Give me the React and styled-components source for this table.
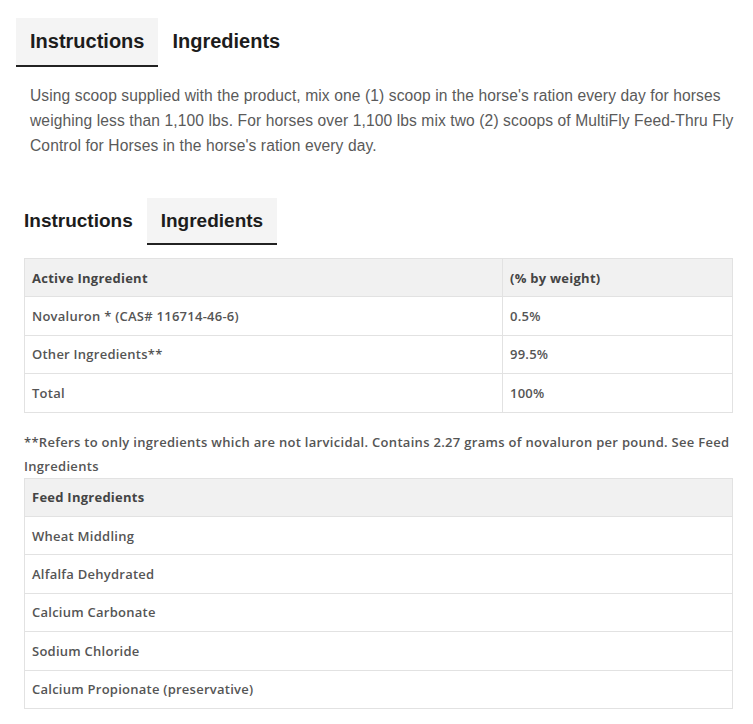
import React from "react";
import styled, { createGlobalStyle } from "styled-components";

const Global = createGlobalStyle`
  html, body { margin: 0; padding: 0; background: #fff; }
  body { font-family: "Liberation Sans", Arial, sans-serif; }
`;

const Page = styled.div`
  width: 753px;
  display: flex;
  flex-direction: column;
`;

const TabBar = styled.div`
  display: flex;
  margin: ${(p) => p.$margin};
`;

const Tab = styled.div`
  height: ${(p) => p.$h}px;
  box-sizing: border-box;
  padding: 0 14px;
  display: flex;
  align-items: center;
  font-family: "Liberation Sans", Arial, sans-serif;
  font-weight: 700;
  font-size: ${(p) => p.$size}px;
  color: #1c1c1c;
  background: ${(p) => (p.$active ? "#f4f4f4" : "transparent")};
  border-bottom: 2px solid ${(p) => (p.$active ? "#222" : "transparent")};
`;

const Paragraph = styled.p`
  margin: 16px 0 0 30px;
  width: 712px;
  font-family: "Liberation Sans", Arial, sans-serif;
  font-size: 15.6px;
  line-height: 25px;
  letter-spacing: 0.1px;
  color: #5a5a5a;
`;

const Table = styled.table`
  margin: 0 0 0 24px;
  width: 709px;
  border-collapse: collapse;
  font-family: "Open Sans", sans-serif;
  font-size: 13px;
  color: #555;
`;

const Cell = styled.td`
  height: 38.4px;
  box-sizing: border-box;
  padding: 0 7px;
  border: 1px solid #e2e2e2;
  font-weight: 600;
  letter-spacing: 0.25px;
  width: ${(p) => p.$w || "auto"};
`;

const HeadCell = styled(Cell).attrs({ as: "th" })`
  text-align: left;
  background: #f1f1f1;
  font-weight: 700;
  color: #444;
`;

const Footnote = styled.p`
  margin: 17px 0 0 24px;
  width: 715px;
  font-family: "Open Sans", sans-serif;
  font-size: 13px;
  font-weight: 600;
  line-height: 24px;
  letter-spacing: 0.3px;
  color: #555;
`;

const active = [
  ["Novaluron * (CAS# 116714-46-6)", "0.5%"],
  ["Other Ingredients**", "99.5%"],
  ["Total", "100%"],
];

const feed = [
  "Wheat Middling",
  "Alfalfa Dehydrated",
  "Calcium Carbonate",
  "Sodium Chloride",
  "Calcium Propionate (preservative)",
];

export default function App() {
  return (
    <Page>
      <Global />
      <TabBar $margin="18px 0 0 16px">
        <Tab $active $h={49} $size={20}>Instructions</Tab>
        <Tab $h={49} $size={20}>Ingredients</Tab>
      </TabBar>
      <Paragraph>
        Using scoop supplied with the product, mix one (1) scoop in the horse's ration every day for horses
        weighing less than 1,100 lbs. For horses over 1,100 lbs mix two (2) scoops of MultiFly Feed-Thru Fly
        Control for Horses in the horse's ration every day.
      </Paragraph>
      <TabBar $margin="40px 0 13px 10px">
        <Tab $h={47} $size={19}>Instructions</Tab>
        <Tab $active $h={47} $size={19}>Ingredients</Tab>
      </TabBar>
      <Table>
        <thead>
          <tr>
            <HeadCell $w="478px">Active Ingredient</HeadCell>
            <HeadCell>(% by weight)</HeadCell>
          </tr>
        </thead>
        <tbody>
          {active.map(([a, b]) => (
            <tr key={a}>
              <Cell>{a}</Cell>
              <Cell>{b}</Cell>
            </tr>
          ))}
        </tbody>
      </Table>
      <Footnote>
        **Refers to only ingredients which are not larvicidal. Contains 2.27 grams of novaluron per pound. See Feed
        Ingredients
      </Footnote>
      <Table>
        <thead>
          <tr>
            <HeadCell>Feed Ingredients</HeadCell>
          </tr>
        </thead>
        <tbody>
          {feed.map((f) => (
            <tr key={f}>
              <Cell>{f}</Cell>
            </tr>
          ))}
        </tbody>
      </Table>
    </Page>
  );
}
